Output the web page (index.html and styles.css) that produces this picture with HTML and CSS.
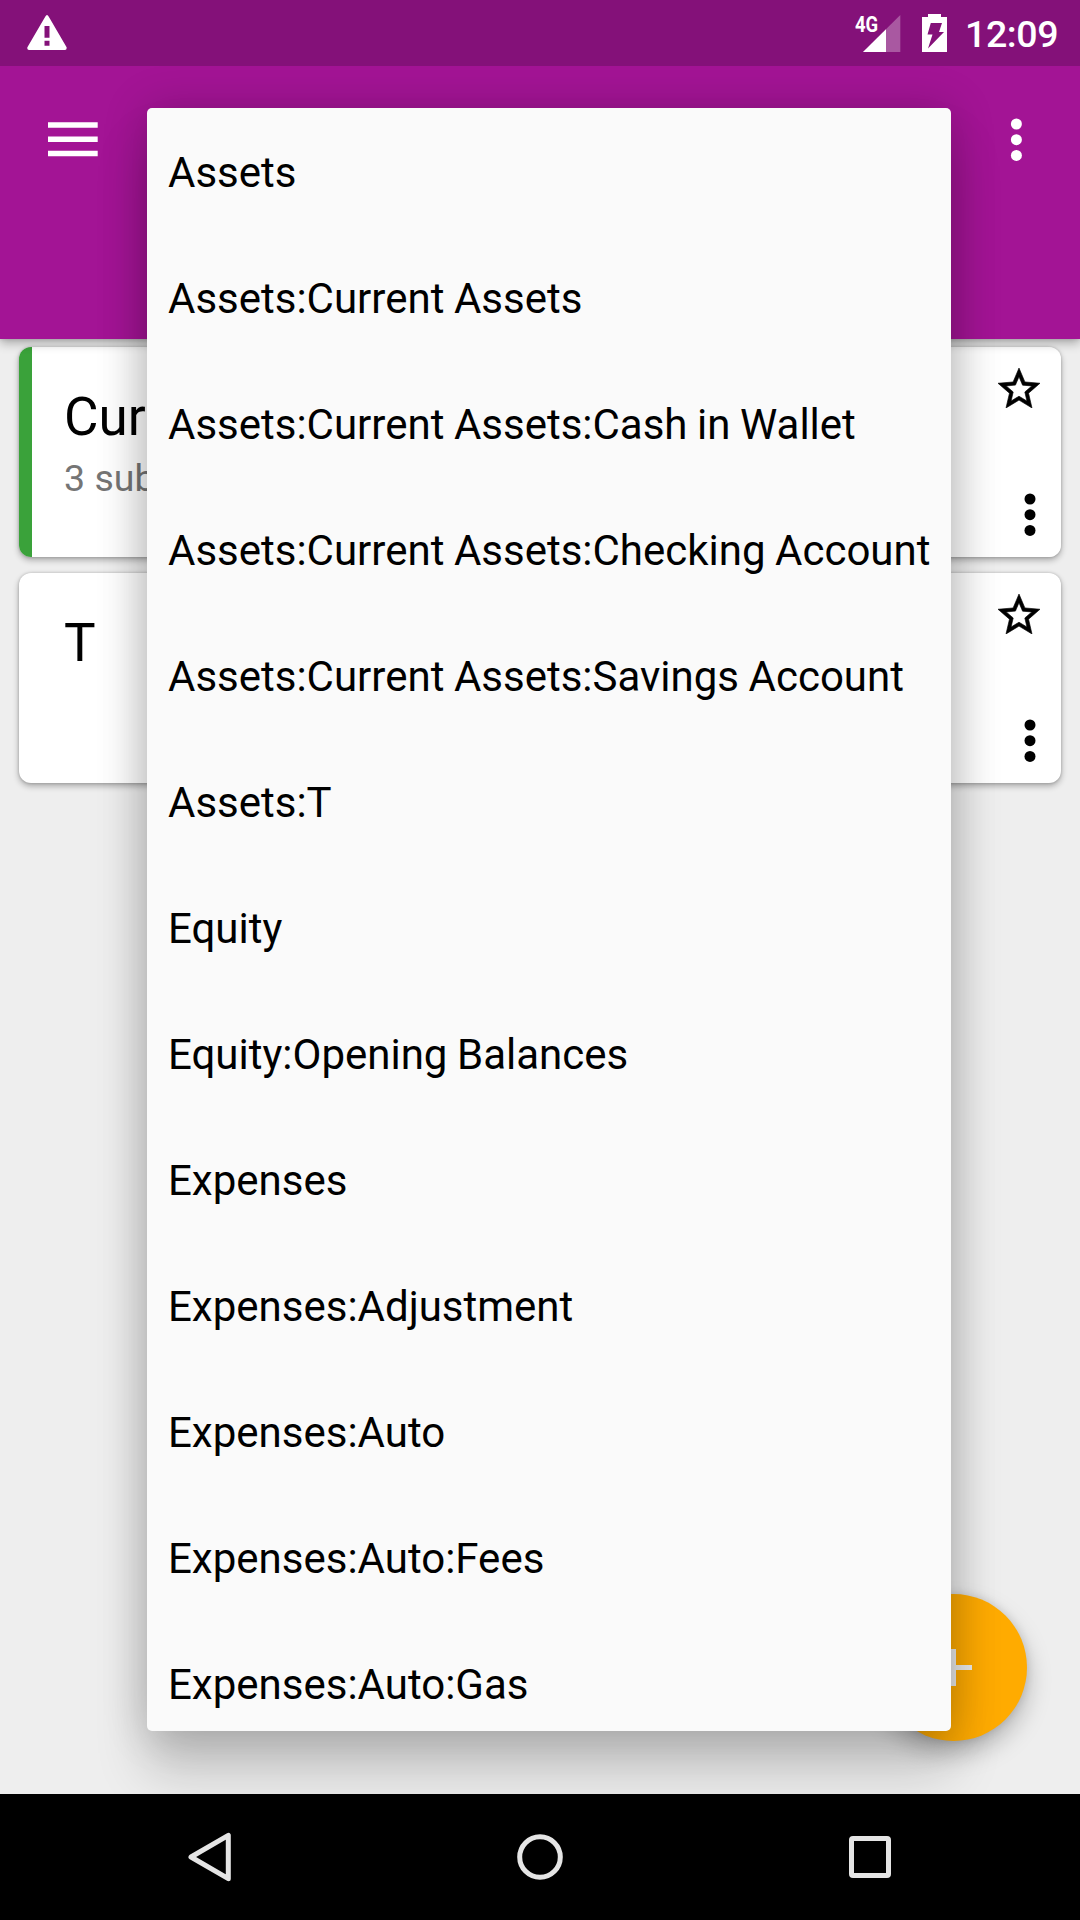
FILE: index.html
```html
<!DOCTYPE html>
<html lang="en">
<head>
<meta charset="utf-8">
<title>Accounts</title>
<link rel="stylesheet" href="styles.css">
</head>
<body>
<div class="screen">
  <header class="status-bar">
    <svg class="warning" width="48" height="40" viewBox="0 0 48 40"><path fill="#fff" fill-rule="evenodd" d="M22.2 2.700Q24 -.5 25.800 2.700L43.600 33.200Q44 35.900 42 35.900H6Q3.800 35.900 4.400 33.200ZM21.500 12h5v11.700h-5ZM21.500 26.700h5v5h-5Z"/></svg>
    <div class="status-right">
      <div class="signal">
        <span class="network">4G</span>
        <svg width="38" height="38" viewBox="0 0 38 38"><path fill="#fff" fill-opacity=".3" d="M37.300 0V37H0Z"/><path fill="#fff" d="M23 14.200V37H0Z"/></svg>
      </div>
      <svg class="battery" width="25" height="38" viewBox="0 0 25 38"><path fill="#fff" fill-rule="evenodd" d="M6 0H19V3H25V38H0V3H6ZM8.800 9H20L17 18H22L6 34.500L10.500 20.500H5.500Z"/></svg>
      <span class="clock">12:09</span>
    </div>
  </header>
  <div class="toolbar">
    <svg width="50" height="35" viewBox="0 0 50 35"><path fill="#fff" d="M0 .3h49.700v5.400H0zM0 14.500h49.700v5.500H0zM0 28.800h49.700v5.400H0z"/></svg>
    <svg width="12" height="44" viewBox="0 0 12 44"><g fill="#fff"><circle cx="6.400" cy="6" r="5.500"/><circle cx="6.400" cy="21.700" r="5.500"/><circle cx="6.400" cy="37.400" r="5.500"/></g></svg>
  </div>
  <main class="accounts">
    <article class="card card-green">
      <div class="account">
        <h2 class="account-name">Current Assets</h2>
        <p class="account-sub">3 sub-accounts</p>
      </div>
      <div class="actions">
        <svg class="star" width="42" height="40" viewBox="2 2 20 19"><path d="M22 9.240l-7.190-.62L12 2 9.190 8.630 2 9.240l5.460 4.730L5.820 21 12 17.270 18.180 21l-1.630-7.030L22 9.240zM12 15.400l-3.760 2.270 1-4.280-3.320-2.880 4.380-.38L12 6.100l1.710 4.040 4.380.38-3.320 2.880 1 4.280L12 15.400z"/></svg>
        <svg class="dots" width="12" height="44" viewBox="0 0 12 44"><g><circle cx="6" cy="6" r="5.500"/><circle cx="6" cy="21.700" r="5.500"/><circle cx="6" cy="37.400" r="5.500"/></g></svg>
      </div>
    </article>
    <article class="card">
      <div class="account">
        <h2 class="account-name">T</h2>
      </div>
      <div class="actions">
        <svg class="star" width="42" height="40" viewBox="2 2 20 19"><path d="M22 9.240l-7.190-.62L12 2 9.190 8.630 2 9.240l5.460 4.730L5.820 21 12 17.270 18.180 21l-1.630-7.030L22 9.240zM12 15.400l-3.760 2.270 1-4.280-3.320-2.880 4.380-.38L12 6.100l1.710 4.040 4.380.38-3.320 2.880 1 4.280L12 15.400z"/></svg>
        <svg class="dots" width="12" height="44" viewBox="0 0 12 44"><g><circle cx="6" cy="6" r="5.500"/><circle cx="6" cy="21.700" r="5.500"/><circle cx="6" cy="37.400" r="5.500"/></g></svg>
      </div>
    </article>
  </main>
  <div class="fab"><svg width="37" height="37" viewBox="0 0 37 37"><path fill="#ececec" d="M16 0h5v16h16v5H21v16h-5V21H0v-5h16z"/></svg></div>
  <ul class="popup">
    <li>Assets</li>
    <li>Assets:Current Assets</li>
    <li>Assets:Current Assets:Cash in Wallet</li>
    <li>Assets:Current Assets:Checking Account</li>
    <li>Assets:Current Assets:Savings Account</li>
    <li>Assets:T</li>
    <li>Equity</li>
    <li>Equity:Opening Balances</li>
    <li>Expenses</li>
    <li>Expenses:Adjustment</li>
    <li>Expenses:Auto</li>
    <li>Expenses:Auto:Fees</li>
    <li>Expenses:Auto:Gas</li>
  </ul>
  <nav class="nav-bar">
    <svg width="50" height="54" viewBox="0 0 50 54"><path d="M43.300 5.300V48.700L6 27Z"/></svg>
    <svg width="50" height="54" viewBox="0 0 50 54"><circle cx="25" cy="27" r="20.300"/></svg>
    <svg width="50" height="54" viewBox="0 0 50 54"><rect x="6.500" y="8.500" width="37" height="37" rx="1.500"/></svg>
  </nav>
</div>
</body>
</html>
```
FILE: styles.css
```css
* { box-sizing: border-box; margin: 0; padding: 0; }
body { font-family: Roboto, "Liberation Sans", sans-serif; color: #000; }
svg { display: block; flex: none; }
.screen {
  position: relative;
  width: 1080px;
  height: 1920px;
  display: flex;
  flex-direction: column;
  overflow: hidden;
  background: #eee;
}
.status-bar {
  position: relative;
  z-index: 4;
  height: 66px;
  display: flex;
  justify-content: space-between;
  align-items: flex-start;
  padding: 14px 22px 0 23.4px;
  background: #841179;
}
.status-right { display: flex; }
.signal { position: relative; margin: 0.5px 21px 0 0; }
.network {
  position: absolute;
  left: -8.500px;
  top: -3px;
  font-size: 22.500px;
  line-height: 24px;
  font-weight: 700;
  color: #fff;
  transform: scaleX(.82);
  transform-origin: left;
}
.battery { margin-right: 18px; }
.clock {
  width: 93px;
  font-size: 37.500px;
  line-height: 41px;
  font-weight: 500;
  letter-spacing: -.4px;
  color: #fff;
}
.toolbar {
  position: relative;
  z-index: 1;
  height: 273px;
  display: flex;
  justify-content: space-between;
  align-items: flex-start;
  padding: 51.500px 58px 0 48.300px;
  background: #a31495;
  box-shadow: 0 4px 10px rgba(0,0,0,.3), 0 0 4px rgba(0,0,0,.12);
}
.toolbar svg:first-child { margin-top: 4px; }
.accounts {
  flex: 1;
  display: flex;
  flex-direction: column;
  gap: 16px;
  padding: 8px 19px 0;
}
.card {
  height: 210px;
  display: flex;
  justify-content: space-between;
  border-radius: 12px;
  background: #fff;
  box-shadow: 0 3px 6px rgba(0,0,0,.3), 0 0 3px rgba(0,0,0,.2);
}
.card-green { background: linear-gradient(to right, #3aa23a 13px, #fff 13px); }
.account { padding: 39px 0 0 45px; }
.account-name { font-size: 53px; line-height: 62px; font-weight: 400; }
.account-sub { margin-top: 8px; font-size: 37.500px; line-height: 44px; color: #757575; }
.actions { display: flex; flex-direction: column; align-items: flex-end; padding: 21px 21px 0 0; }
.star { stroke: #000; stroke-width: .3; }
.dots { margin: 85.300px 4px 0 0; }
.fab {
  position: absolute;
  left: 880px;
  top: 1594px;
  width: 147px;
  height: 147px;
  display: grid;
  place-items: center;
  border-radius: 50%;
  background: #ffab00;
  box-shadow: 0 12px 24px rgba(0,0,0,.25), 0 0 10px rgba(0,0,0,.12);
}
.popup {
  position: absolute;
  z-index: 2;
  left: 147px;
  top: 108px;
  width: 804px;
  height: 1623px;
  padding: 2px 21px 0;
  overflow: hidden;
  list-style: none;
  border-radius: 5px;
  background: #fafafa;
  box-shadow: 0 40px 52px rgba(0,0,0,.19), 0 0 46px rgba(0,0,0,.2);
}
.popup li {
  height: 126px;
  font-size: 42px;
  line-height: 126px;
  word-spacing: -.9px;
  white-space: nowrap;
}
.nav-bar {
  position: relative;
  z-index: 3;
  height: 126px;
  display: flex;
  justify-content: center;
  gap: 280px;
  padding-top: 36px;
  background: #000;
}
.nav-bar svg { fill: none; stroke: #e5e5e5; stroke-width: 5; stroke-linejoin: round; }
```
